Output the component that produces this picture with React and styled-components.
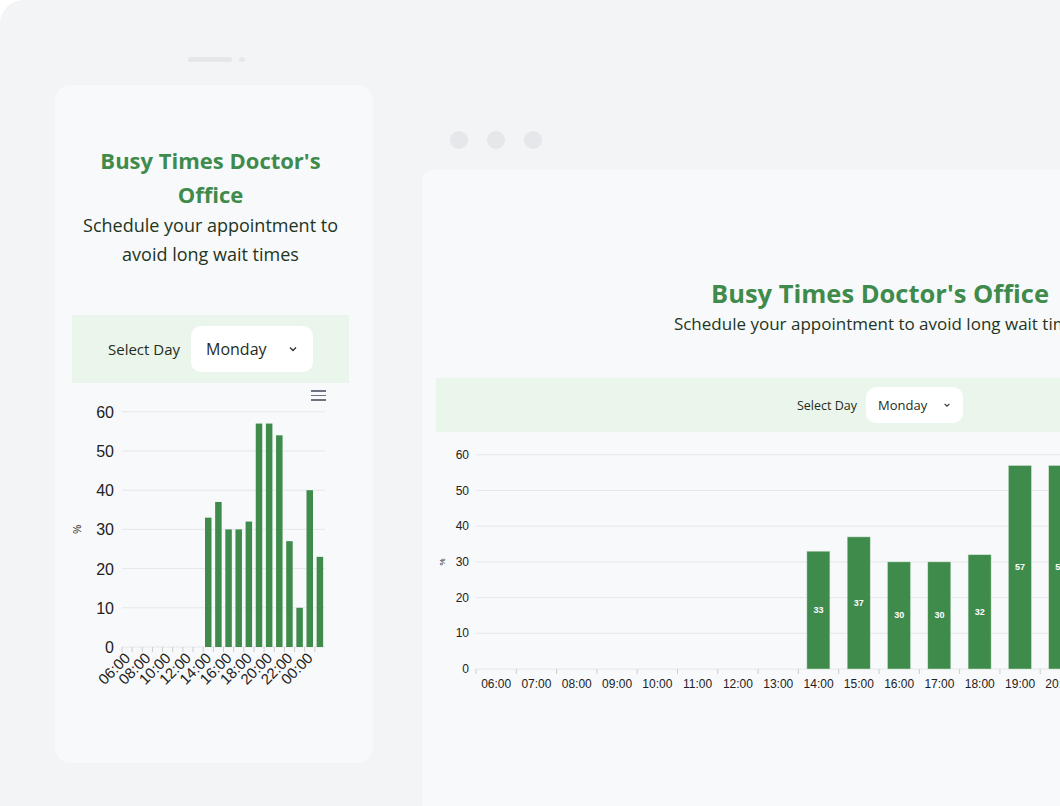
import React from "react";
import styled, { createGlobalStyle } from "styled-components";

const GlobalStyle = createGlobalStyle`
  html, body { margin: 0; padding: 0; background: #ffffff; }
  body { font-family: "Open Sans", "Noto Sans", sans-serif; }
`;

const GREEN = "#3f8b4b";
const hours = ["06:00","07:00","08:00","09:00","10:00","11:00","12:00","13:00","14:00","15:00","16:00","17:00","18:00","19:00","20:00","21:00","22:00","23:00","00:00","01:00"];
const values = [0,0,0,0,0,0,0,0,33,37,30,30,32,57,57,54,27,10,40,23];

const Stage = styled.div`
  position: relative;
  width: 1060px;
  height: 806px;
  overflow: hidden;
  background: #f3f4f6;
  border-radius: 24px 0 0 0;
`;

const Notch = styled.div`
  position: absolute;
  left: 188px;
  top: 57px;
  display: flex;
  gap: 7px;
  align-items: center;
`;

const NotchBar = styled.div`
  width: ${(p) => p.$w}px;
  height: 5px;
  border-radius: 3px;
  background: #e5e7eb;
`;

const Phone = styled.div`
  position: absolute;
  left: 55px;
  top: 85px;
  width: 318px;
  height: 678px;
  background: #f8f9fb;
  border-radius: 16px;
  padding: 58px 24px 0 17px;
  box-sizing: border-box;
  display: flex;
  flex-direction: column;
`;

const Dots = styled.div`
  position: absolute;
  left: 450px;
  top: 131px;
  display: flex;
  gap: 19px;
`;

const Dot = styled.div`
  width: 18px;
  height: 18px;
  border-radius: 50%;
  background: #e5e7eb;
`;

const Browser = styled.div`
  position: absolute;
  left: 422px;
  top: 170px;
  width: 916px;
  height: 636px;
  background: #f8f9fb;
  border-radius: 12px 0 0 0;
  padding: 104px 14px 0;
  box-sizing: border-box;
  display: flex;
  flex-direction: column;
`;

const Title = styled.h1`
  margin: 0;
  text-align: center;
  color: ${GREEN};
  font-weight: 700;
  font-size: ${(p) => p.$size}px;
  line-height: ${(p) => p.$lh}px;
`;

const Subtitle = styled.p`
  margin: 0;
  text-align: center;
  color: #1e3522;
  font-size: ${(p) => p.$size}px;
  line-height: ${(p) => p.$lh}px;
`;

const SelectBar = styled.div`
  display: flex;
  justify-content: center;
  align-items: center;
  gap: ${(p) => p.$gap}px;
  height: ${(p) => p.$h}px;
  margin-top: ${(p) => p.$mt}px;
  background: #eaf5ec;
`;

const Label = styled.span`
  color: #1f2b22;
  font-size: ${(p) => p.$size}px;
`;

const SelectBox = styled.div`
  display: flex;
  align-items: center;
  justify-content: space-between;
  box-sizing: border-box;
  width: ${(p) => p.$w}px;
  height: ${(p) => p.$h}px;
  padding: 0 ${(p) => p.$pad}px;
  background: #ffffff;
  border-radius: 10px;
  color: #1f2b22;
  font-size: ${(p) => p.$size}px;
`;

const ChartWrap = styled.div`
  position: relative;
  svg { overflow: visible; display: block; }
`;

const Menu = styled.div`
  position: absolute;
  left: 239px;
  top: 7px;
  width: 15px;
  display: flex;
  flex-direction: column;
  gap: 3px;
  span { height: 1.5px; background: #6b7280; display: block; }
`;

function Chevron({ size }) {
  return (
    <svg width={size} height={size} viewBox="0 0 10 10">
      <path d="M2 3.5 L5 6.5 L8 3.5" fill="none" stroke="#333" strokeWidth="1.4" />
    </svg>
  );
}

function MobileChart() {
  const x0 = 50, y0 = 264, step = 39.2, slot = 10.15;
  return (
    <svg width="277" height="310">
      {[0, 10, 20, 30, 40, 50, 60].map((v) => (
        <g key={v}>
          <line x1={x0} x2={x0 + 20 * slot} y1={y0 - (v / 10) * step} y2={y0 - (v / 10) * step} stroke="#e6e7ea" />
          <text x={42} y={y0 - (v / 10) * step + 6} textAnchor="end" fontSize="16" fontFamily="Liberation Sans, sans-serif" fill="#222">{v}</text>
        </g>
      ))}
      <text transform={`translate(9 ${y0 - 3 * step}) rotate(-90)`} textAnchor="middle" fontSize="10" fill="#222" fontFamily="Liberation Sans, sans-serif">%</text>
      {values.map((v, i) => {
        const h = (v / 10) * step;
        return v ? <rect key={i} x={x0 + i * slot + 1.8} y={y0 - h} width={6.5} height={h} fill={GREEN} /> : null;
      })}
      {hours.map((_, i) => (
        <line key={i} x1={x0 + i * slot} x2={x0 + i * slot} y1={y0} y2={y0 + 5} stroke="#ccc" />
      ))}
      {hours.filter((_, i) => i % 2 === 0).map((h, j) => {
        const cx = x0 + j * 2 * slot + slot / 2 + 4;
        return (
          <text key={h} transform={`translate(${cx} ${y0 + 12}) rotate(-45)`} textAnchor="end" fontSize="15" fill="#222" fontFamily="Liberation Sans, sans-serif">{h}</text>
        );
      })}
    </svg>
  );
}

function DesktopChart() {
  const x0 = 40, y0 = 237, step = 35.7, slot = 40.3;
  return (
    <svg width="888" height="270">
      {[0, 10, 20, 30, 40, 50, 60].map((v) => (
        <g key={v}>
          <line x1={x0} x2={888} y1={y0 - (v / 10) * step} y2={y0 - (v / 10) * step} stroke="#e6e7ea" />
          <text x={33} y={y0 - (v / 10) * step + 4} textAnchor="end" fontSize="12" fontFamily="Liberation Sans, sans-serif" fill="#222">{v}</text>
        </g>
      ))}
      <text transform={`translate(9 ${y0 - 3 * step}) rotate(-90)`} textAnchor="middle" fontSize="8" fill="#222" fontFamily="Liberation Sans, sans-serif">%</text>
      {values.map((v, i) => {
        const h = (v / 10) * step;
        return v ? (
          <g key={i}>
            <rect x={x0 + i * slot + 8.5} y={y0 - h} width={23} height={h} fill={GREEN} stroke="#cfe3d2" strokeWidth="0.5" />
            <text x={x0 + i * slot + slot / 2} y={y0 - h / 2 + 3} textAnchor="middle" fontSize="9" fontWeight="700" fill="#fff" fontFamily="Liberation Sans, sans-serif">{v}</text>
          </g>
        ) : null;
      })}
      {hours.map((h, i) => (
        <g key={h}>
          <line x1={x0 + i * slot} x2={x0 + i * slot} y1={y0} y2={y0 + 5} stroke="#ccc" />
          <text x={x0 + i * slot + slot / 2} y={y0 + 19} textAnchor="middle" fontSize="12" fill="#222" fontFamily="Liberation Sans, sans-serif">{h}</text>
        </g>
      ))}
    </svg>
  );
}

export default function App() {
  return (
    <>
      <GlobalStyle />
      <Stage>
        <Notch>
          <NotchBar $w={44} />
          <NotchBar $w={6} />
        </Notch>
        <Phone>
          <Title $size={22} $lh={34}>Busy Times Doctor's<br />Office</Title>
          <Subtitle $size={18} $lh={29}>Schedule your appointment to avoid long wait times</Subtitle>
          <SelectBar $gap={11} $h={68} $mt={46}>
            <Label $size={15}>Select Day</Label>
            <SelectBox $w={122} $h={46} $pad={15} $size={16}>
              Monday <Chevron size={10} />
            </SelectBox>
          </SelectBar>
          <ChartWrap>
            <Menu><span /><span /><span /></Menu>
            <MobileChart />
          </ChartWrap>
        </Phone>
        <Dots><Dot /><Dot /><Dot /></Dots>
        <Browser>
          <Title $size={25.5} $lh={38}>Busy Times Doctor's Office</Title>
          <Subtitle $size={17} $lh={24}>Schedule your appointment to avoid long wait times</Subtitle>
          <SelectBar $gap={9} $h={54} $mt={42}>
            <Label $size={12.5}>Select Day</Label>
            <SelectBox $w={97} $h={36} $pad={12} $size={13}>
              Monday <Chevron size={8} />
            </SelectBox>
          </SelectBar>
          <ChartWrap>
            <DesktopChart />
          </ChartWrap>
        </Browser>
      </Stage>
    </>
  );
}
